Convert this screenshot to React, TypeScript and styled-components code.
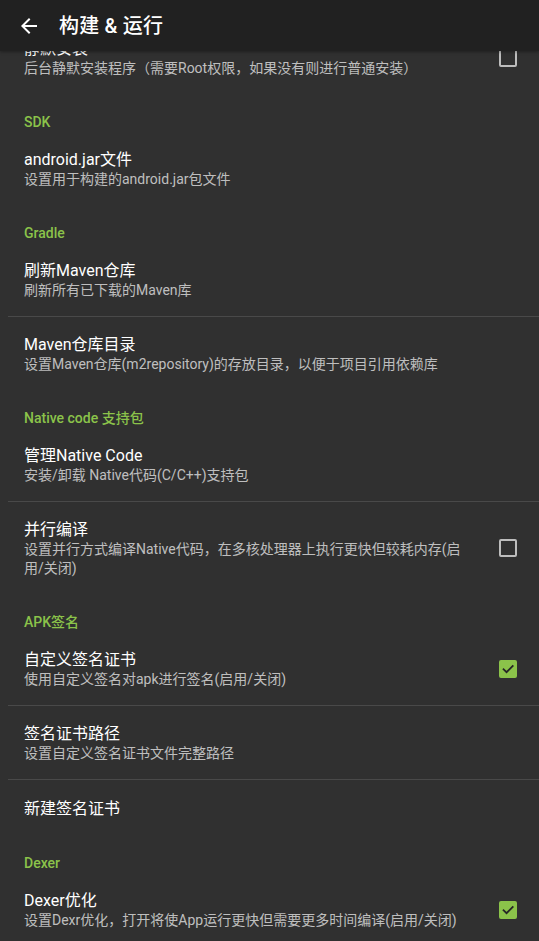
import React from "react";
import styled, { createGlobalStyle } from "styled-components";

const GlobalStyle = createGlobalStyle`
  html, body {
    margin: 0;
    padding: 0;
    background: #303030;
  }
  body {
    font-family: Roboto, "Noto Sans CJK SC", "Noto Sans", sans-serif;
    -webkit-font-smoothing: antialiased;
  }
  * { box-sizing: border-box; }
`;

const Screen = styled.div`
  width: 539px;
  height: 941px;
  display: flex;
  flex-direction: column;
  overflow: hidden;
  background: #303030;
`;

const AppBar = styled.header`
  position: relative;
  z-index: 2;
  flex: 0 0 51px;
  height: 51px;
  display: flex;
  align-items: center;
  padding-left: 17px;
  background: #212121;
  box-shadow: 0 1px 3px rgba(0, 0, 0, 0.35);
`;

const BackButton = styled.button`
  display: flex;
  align-items: center;
  justify-content: center;
  width: 24px;
  height: 24px;
  padding: 0;
  border: none;
  background: transparent;
  color: #ffffff;
`;

const Title = styled.h1`
  margin: 0 0 0 18px;
  font-size: 20px;
  line-height: 24px;
  font-weight: 500;
  color: #ffffff;
  letter-spacing: 0.2px;
`;

const ScrollArea = styled.main`
  flex: 1;
  overflow: hidden;
`;

const List = styled.div<{ $offset: number }>`
  display: flex;
  flex-direction: column;
  margin-top: ${(p) => -p.$offset}px;
`;

const CategoryTitle = styled.div`
  padding: 19px 24px 0;
  font-size: 14px;
  line-height: 19px;
  font-weight: 500;
  color: #8bc34a;
`;

const Row = styled.div`
  display: flex;
  align-items: center;
  min-height: 55px;
  padding: 0 22px 0 24px;
`;

const TextBlock = styled.div`
  flex: 1;
  min-width: 0;
  padding: 17px 0 16px;
`;

const ItemTitle = styled.div`
  font-size: 16px;
  line-height: 21px;
  color: #ffffff;
`;

const Summary = styled.div`
  font-size: 14px;
  line-height: 19px;
  color: rgba(255, 255, 255, 0.7);
`;

const Divider = styled.div`
  height: 1px;
  margin-left: 8px;
  background: rgba(255, 255, 255, 0.12);
`;

const Box = styled.span<{ $checked: boolean }>`
  flex: 0 0 18px;
  width: 18px;
  height: 18px;
  margin-left: 30px;
  border-radius: 2px;
  border: 2px solid ${(p) => (p.$checked ? "#8bc34a" : "#bdbdbd")};
  background: ${(p) => (p.$checked ? "#8bc34a" : "transparent")};
  display: flex;
  align-items: center;
  justify-content: center;
`;

const ArrowBack = () => (
  <svg width="24" height="24" viewBox="0 0 24 24" fill="currentColor">
    <path d="M20 11H7.83l5.59-5.59L12 4l-8 8 8 8 1.41-1.41L7.83 13H20v-2z" />
  </svg>
);

const CheckBox = ({ checked }: { checked: boolean }) => (
  <Box $checked={checked}>
    {checked && (
      <svg width="14" height="14" viewBox="0 0 24 24">
        <path
          d="M4.5 12.5l5 5L20 7"
          fill="none"
          stroke="#262626"
          strokeWidth="3.2"
          strokeLinecap="square"
        />
      </svg>
    )}
  </Box>
);

type Pref = {
  title: string;
  summary?: string;
  checkbox?: boolean;
};

type Category = {
  name?: string;
  items: Pref[];
};

const categories: Category[] = [
  {
    items: [
      {
        title: "静默安装",
        summary: "后台静默安装程序（需要Root权限，如果没有则进行普通安装）",
        checkbox: false,
      },
    ],
  },
  {
    name: "SDK",
    items: [{ title: "android.jar文件", summary: "设置用于构建的android.jar包文件" }],
  },
  {
    name: "Gradle",
    items: [
      { title: "刷新Maven仓库", summary: "刷新所有已下载的Maven库" },
      {
        title: "Maven仓库目录",
        summary: "设置Maven仓库(m2repository)的存放目录，以便于项目引用依赖库",
      },
    ],
  },
  {
    name: "Native code 支持包",
    items: [
      { title: "管理Native Code", summary: "安装/卸载 Native代码(C/C++)支持包" },
      {
        title: "并行编译",
        summary: "设置并行方式编译Native代码，在多核处理器上执行更快但较耗内存(启用/关闭)",
        checkbox: false,
      },
    ],
  },
  {
    name: "APK签名",
    items: [
      {
        title: "自定义签名证书",
        summary: "使用自定义签名对apk进行签名(启用/关闭)",
        checkbox: true,
      },
      { title: "签名证书路径", summary: "设置自定义签名证书文件完整路径" },
      { title: "新建签名证书" },
    ],
  },
  {
    name: "Dexer",
    items: [
      {
        title: "Dexer优化",
        summary: "设置Dexr优化，打开将使App运行更快但需要更多时间编译(启用/关闭)",
        checkbox: true,
      },
    ],
  },
];

const PrefRow = ({ pref }: { pref: Pref }) => (
  <Row>
    <TextBlock>
      <ItemTitle>{pref.title}</ItemTitle>
      {pref.summary && <Summary>{pref.summary}</Summary>}
    </TextBlock>
    {pref.checkbox !== undefined && <CheckBox checked={pref.checkbox} />}
  </Row>
);

export default function App() {
  return (
    <>
      <GlobalStyle />
      <Screen>
        <AppBar>
          <BackButton aria-label="返回">
            <ArrowBack />
          </BackButton>
          <Title>构建 &amp; 运行</Title>
        </AppBar>
        <ScrollArea>
          <List $offset={30}>
            {categories.map((cat, ci) => (
              <React.Fragment key={ci}>
                {cat.name && <CategoryTitle>{cat.name}</CategoryTitle>}
                {cat.items.map((item, ii) => (
                  <React.Fragment key={ii}>
                    {ii > 0 && <Divider />}
                    <PrefRow pref={item} />
                  </React.Fragment>
                ))}
              </React.Fragment>
            ))}
          </List>
        </ScrollArea>
      </Screen>
    </>
  );
}
